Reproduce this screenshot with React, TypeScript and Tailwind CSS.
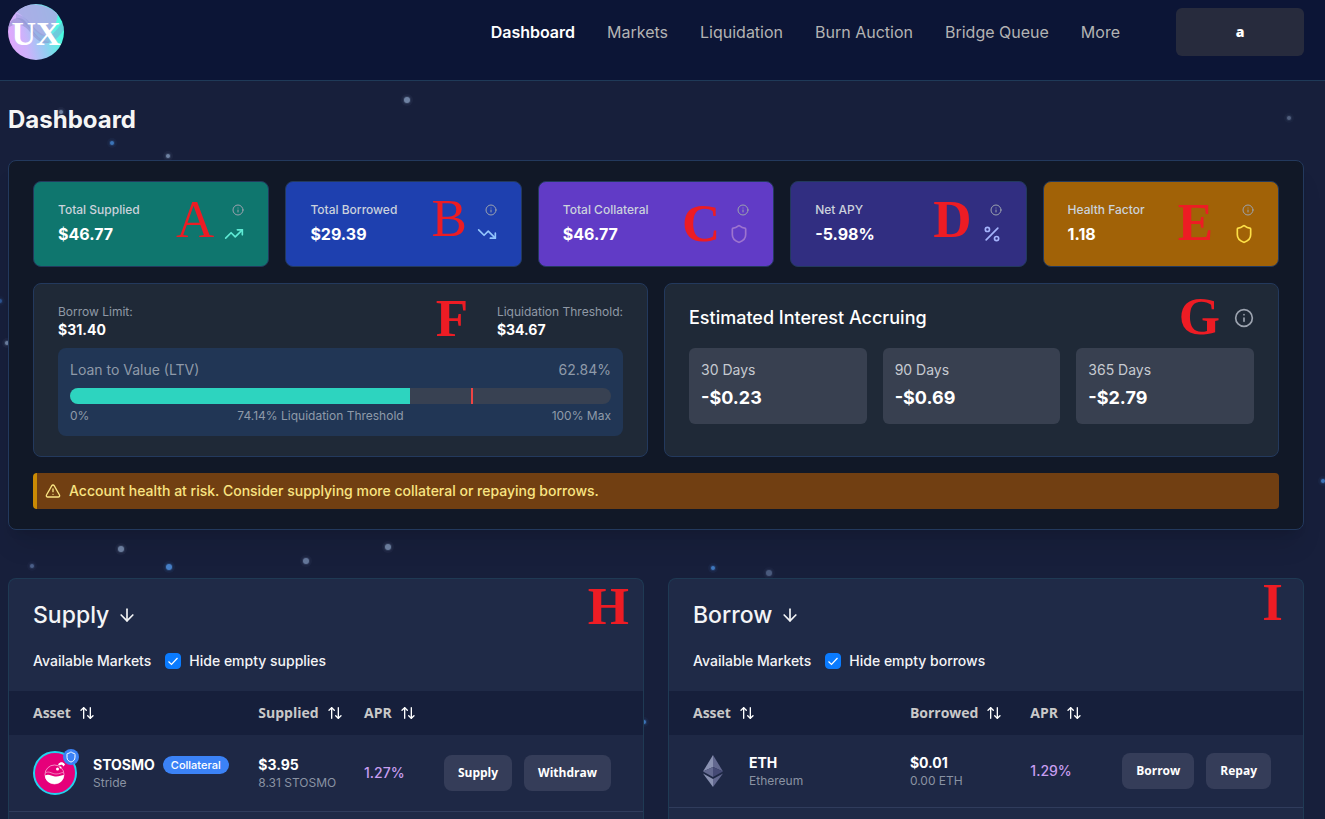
import React, { useState } from "react";
import {
  ArrowDown,
  ArrowUpDown,
  Info,
  Percent,
  Shield,
  TrendingDown,
  TrendingUp,
  TriangleAlert,
} from "lucide-react";
import type { LucideIcon } from "lucide-react";

const HEADING = "font-['Open_Sans',sans-serif]";

const STARS = [
  { x: 407, y: 100, r: 3, fill: "#6f82a3" },
  { x: 1289, y: 118, r: 2, fill: "#52617f" },
  { x: 112, y: 143, r: 2, fill: "#3c74b8" },
  { x: 168, y: 156, r: 2, fill: "#6f82a3" },
  { x: 61, y: 112, r: 2, fill: "#6f82a3" },
  { x: 0, y: 301, r: 2, fill: "#2d5391" },
  { x: 7, y: 343, r: 2, fill: "#6f82a3" },
  { x: 1323, y: 481, r: 2, fill: "#3c74b8" },
  { x: 121, y: 549, r: 3, fill: "#6f82a3" },
  { x: 32, y: 566, r: 2, fill: "#4b5f88" },
  { x: 169, y: 567, r: 3, fill: "#467fc6" },
  { x: 306, y: 561, r: 3, fill: "#64779a" },
  { x: 388, y: 547, r: 3, fill: "#6f82a3" },
  { x: 713, y: 568, r: 2, fill: "#3f78be" },
  { x: 769, y: 573, r: 3, fill: "#4a5a7d" },
  { x: 644, y: 722, r: 2, fill: "#3c74b8" },
];

function Starfield() {
  return (
    <svg aria-hidden="true" className="pointer-events-none absolute inset-0 h-full w-full">
      {STARS.map((s) => (
        <g key={`${s.x}-${s.y}`} fill={s.fill}>
          <circle cx={s.x} cy={s.y} r={s.r + 3} opacity={0.08} />
          <circle cx={s.x} cy={s.y} r={s.r + 1} opacity={0.22} />
          <circle cx={s.x} cy={s.y} r={s.r} />
        </g>
      ))}
    </svg>
  );
}

function Logo() {
  return (
    <a href="#home" aria-label="UX home" className="block h-14 w-14 shrink-0">
      <svg viewBox="0 0 56 56" className="h-14 w-14">
        <defs>
          <linearGradient id="lg" x1="0" y1="0.75" x2="1" y2="0.5">
            <stop offset="0" stopColor="#e3a6fd" />
            <stop offset="0.3" stopColor="#cdb2fb" />
            <stop offset="0.62" stopColor="#93cdf2" />
            <stop offset="0.85" stopColor="#5feee4" />
            <stop offset="1" stopColor="#42ffe0" />
          </linearGradient>
          <clipPath id="lc">
            <circle cx="28" cy="28" r="28" />
          </clipPath>
        </defs>
        <g clipPath="url(#lc)">
          <rect width="56" height="56" fill="url(#lg)" />
          <path d="M8 4C20 0 38 -2 50 10C48 22 44 28 38 32C26 32 20 12 8 8Z" fill="#a7ade4" opacity="0.9" />
          <path d="M0 22C4 14 10 12 16 16C24 24 30 38 42 38C36 42 28 36 22 28C16 20 8 18 0 24Z" fill="#8b8fcb" opacity="0.55" />
          <path d="M8 10C22 12 26 30 40 32C48 30 52 20 56 16V26C50 34 44 40 38 38C26 34 20 18 8 14Z" fill="#8793cf" opacity="0.4" />
        </g>
        <text x="28" y="41" textAnchor="middle" fill="#fff" className="font-['Liberation_Serif',serif] text-[34px] font-bold">
          UX
        </text>
      </svg>
    </a>
  );
}

const NAV = ["Dashboard", "Markets", "Liquidation", "Burn Auction", "Bridge Queue", "More"];

function Header() {
  return (
    <header className="relative border-b border-[#1f3a58] bg-[#0c1536] pr-[21px] pb-4 pl-2">
      <div className="flex h-16 items-center">
        <Logo />
        <nav className="ml-auto flex gap-8 text-base text-[#b3b3b3]">
          {NAV.map((item, i) => (
            <a key={item} href={`#${item}`} className={i === 0 ? "font-semibold text-white" : ""}>
              {item}
            </a>
          ))}
        </nav>
        <button type="button" className={`${HEADING} ml-14 h-12 w-32 rounded-md bg-[#272b3d] text-sm font-extrabold text-white`}>
          a
        </button>
      </div>
    </header>
  );
}

function Marker({ letter, className }: { letter: string; className: string }) {
  return (
    <span
      className={`pointer-events-none absolute font-['Liberation_Serif',serif] text-[53px] leading-none text-[#ed1c24] ${className}`}
    >
      {letter}
    </span>
  );
}

type Stat = {
  label: string;
  value: string;
  icon: LucideIcon;
  bg: string;
  iconColor: string;
  letter: string;
  marker: string;
};

const STATS: Stat[] = [
  { label: "Total Supplied", value: "$46.77", icon: TrendingUp, bg: "bg-[#0f766e]", iconColor: "text-[#5eead4]", letter: "A", marker: "top-[11px] right-[54px]" },
  { label: "Total Borrowed", value: "$29.39", icon: TrendingDown, bg: "bg-[#1e40af]", iconColor: "text-[#93c5fd]", letter: "B", marker: "top-[10px] right-[54px]" },
  { label: "Total Collateral", value: "$46.77", icon: Shield, bg: "bg-[#613bc6]", iconColor: "text-[#9d74cf]", letter: "C", marker: "top-[15px] right-[53px] font-bold" },
  { label: "Net APY", value: "-5.98%", icon: Percent, bg: "bg-[#312e81]", iconColor: "text-[#a5b4fc]", letter: "D", marker: "top-[11px] right-[54px] font-bold" },
  { label: "Health Factor", value: "1.18", icon: Shield, bg: "bg-[#a16207]", iconColor: "text-[#fde047]", letter: "E", marker: "top-[14px] right-[65px] font-bold" },
];

function StatCard({ stat }: { stat: Stat }) {
  const Icon = stat.icon;
  return (
    <div className={`relative rounded-lg border border-[#23395d] px-6 py-5 ${stat.bg}`}>
      <div className="flex items-center justify-between">
        <span className="text-xs font-medium text-[#cbd2dc]">{stat.label}</span>
        <Info size={12} className="text-[#9ca3af]" />
      </div>
      <div className="mt-1 flex items-center justify-between">
        <span className="text-base font-bold text-white">{stat.value}</span>
        <Icon size={20} className={stat.iconColor} />
      </div>
      <Marker letter={stat.letter} className={stat.marker} />
    </div>
  );
}

const LTV = 62.84;
const LIQUIDATION = 74.14;

function BorrowLimitCard() {
  return (
    <div className="relative rounded-lg border border-[#23395d] bg-[#1f2937] px-6 py-5">
      <div className="mb-2 flex justify-between text-xs text-[#9099a6]">
        <div>
          <div>Borrow Limit:</div>
          <div className="text-sm font-bold text-white">$31.40</div>
        </div>
        <div>
          <div>Liquidation Threshold:</div>
          <div className="text-sm font-bold text-white">$34.67</div>
        </div>
      </div>
      <div className="rounded-lg bg-[#213655] p-3 text-[#8f9aa9]">
        <div className="mb-2 flex justify-between text-sm">
          <span>Loan to Value (LTV)</span>
          <span>62.84%</span>
        </div>
        <div className="relative h-4 overflow-hidden rounded-full bg-[#384152]">
          <div className="h-full bg-[#2dd4bf]" style={{ width: `${LTV}%` }} />
          <div className="absolute inset-y-0 w-0.5 bg-[#ef4444]" style={{ left: `${LIQUIDATION}%` }} />
        </div>
        <div className="mt-1 flex justify-between text-xs">
          <span>0%</span>
          <span>74.14% Liquidation Threshold</span>
          <span>100% Max</span>
        </div>
      </div>
      <Marker letter="F" className="top-[8px] right-[179px] font-bold" />
    </div>
  );
}

const INTEREST = [
  { period: "30 Days", amount: "-$0.23" },
  { period: "90 Days", amount: "-$0.69" },
  { period: "365 Days", amount: "-$2.79" },
];

function InterestCard() {
  return (
    <div className="relative rounded-lg border border-[#23395d] bg-[#1f2937] px-6 py-5">
      <div className="mb-4 flex items-center justify-between">
        <h2 className="text-lg font-medium text-white">Estimated Interest Accruing</h2>
        <Info size={20} className="text-[#9ca3af]" />
      </div>
      <div className="grid grid-cols-3 gap-4">
        {INTEREST.map((row) => (
          <div key={row.period} className="rounded-md bg-[#384050] p-3">
            <div className="text-sm text-[#c6cad0]">{row.period}</div>
            <div className="mt-1 text-lg font-bold text-white">{row.amount}</div>
          </div>
        ))}
      </div>
      <Marker letter="G" className="top-[6px] right-[58px] font-bold" />
    </div>
  );
}

function Overview() {
  return (
    <section className="relative rounded-lg border border-[#23395d] bg-[#111827] px-6 py-5 shadow-xl">
      <div className="grid grid-cols-5 gap-4">
        {STATS.map((s) => (
          <StatCard key={s.label} stat={s} />
        ))}
      </div>
      <div className="mt-4 grid grid-cols-2 gap-4">
        <BorrowLimitCard />
        <InterestCard />
      </div>
      <div className="mt-4 flex items-center gap-2 rounded-sm border-l-4 border-[#ca8a04] bg-[#713f12] p-2 text-sm font-medium text-[#f9e482]">
        <TriangleAlert size={16} />
        <span>Account health at risk. Consider supplying more collateral or repaying borrows.</span>
      </div>
    </section>
  );
}

function StrideIcon() {
  return (
    <div className="relative h-11 w-11 shrink-0">
      <svg viewBox="0 0 44 44" className="h-11 w-11">
        <circle cx="22" cy="22" r="21" fill="#e6007a" stroke="#22d3ee" strokeWidth="2" />
        <circle cx="21.500" cy="23.500" r="9.500" fill="none" stroke="#fff" strokeWidth="0.700" opacity="0.8" />
        <path d="M12 24.500C16 22.500 18 25 22 25.500C26 26 28 24 31 24C31 29 27 33 21.500 33C16 33 12 29 12 24.500Z" fill="#fff" />
        <path d="M13 21.500C17 20 19 23 23 23C27 23 28 21.500 30 21.500" fill="none" stroke="#fff" strokeWidth="0.800" opacity="0.6" />
        <circle cx="24.500" cy="18" r="1.500" fill="#fff" />
        <path d="M25 13.500C27 10.500 30 10.500 32 13.500L30.500 15.500C29.500 13.500 28 13 26.500 14.500Z" fill="#fff" />
        <circle cx="27.500" cy="16.500" r="1" fill="#fff" />
      </svg>
      <span className="absolute -top-0.5 -right-0.5 flex h-4 w-4 items-center justify-center rounded-full bg-[#3b82f6]">
        <Shield size={12} className="text-white" />
      </span>
    </div>
  );
}

function EthIcon() {
  return (
    <div className="flex h-10 w-10 shrink-0 items-center justify-center">
      <svg viewBox="0 0 20 32" className="h-8 w-5">
        <path d="M10 0L0 16.500L10 12Z" fill="#8a92b2" />
        <path d="M10 0L20 16.500L10 12Z" fill="#62688f" />
        <path d="M0 16.500L10 12V22Z" fill="#62688f" />
        <path d="M20 16.500L10 12V22Z" fill="#454a75" />
        <path d="M0 18.500L10 24V32Z" fill="#8a92b2" />
        <path d="M20 18.500L10 24V32Z" fill="#62688f" />
      </svg>
    </div>
  );
}

type Market = {
  title: string;
  filter: string;
  amountHeading: string;
  columns: [string, string];
  amountPad: string;
  symbol: string;
  name: string;
  collateral: boolean;
  icon: React.ReactNode;
  value: string;
  units: string;
  apr: string;
  actions: string[];
  letter: string;
  marker: string;
};

const MARKETS: Market[] = [
  {
    title: "Supply",
    filter: "Hide empty supplies",
    amountHeading: "Supplied",
    columns: ["w-[39%]", "w-[17%]"],
    amountPad: "pl-0.5",
    symbol: "STOSMO",
    name: "Stride",
    collateral: true,
    icon: <StrideIcon />,
    value: "$3.95",
    units: "8.31 STOSMO",
    apr: "1.27%",
    actions: ["Supply", "Withdraw"],
    letter: "H",
    marker: "top-[1px] right-[14px] font-bold",
  },
  {
    title: "Borrow",
    filter: "Hide empty borrows",
    amountHeading: "Borrowed",
    columns: ["w-[38%]", "w-[19%]"],
    amountPad: "pl-0",
    symbol: "ETH",
    name: "Ethereum",
    collateral: false,
    icon: <EthIcon />,
    value: "$0.01",
    units: "0.00 ETH",
    apr: "1.29%",
    actions: ["Borrow", "Repay"],
    letter: "I",
    marker: "top-[-3px] right-[20px] font-bold",
  },
];

function SortButton({ label }: { label: string }) {
  return (
    <button type="button" className="flex items-center gap-2 font-bold">
      {label}
      <ArrowUpDown size={16} className="text-white" />
    </button>
  );
}

function MarketPanel({ market }: { market: Market }) {
  const [hideEmpty, setHideEmpty] = useState(true);
  const id = `hide-${market.title.toLowerCase()}`;
  return (
    <section className="relative rounded-t-lg border border-b-0 border-[#1f3a54] bg-[#1f2a47]">
      <div className="px-6 py-5">
        <h2 className="flex items-center gap-2 text-[23px] leading-8 font-medium text-[#f3f4f6]">
          {market.title}
          <ArrowDown size={20} />
        </h2>
        <div className="mt-5 flex items-center text-sm font-medium text-[#f3f4f6]">
          <span>Available Markets</span>
          <span className="relative ml-3.5 h-4 w-4">
            <input
              id={id}
              type="checkbox"
              checked={hideEmpty}
              onChange={(e) => setHideEmpty(e.target.checked)}
              className="block h-4 w-4 appearance-none rounded-sm border border-[#0a7bff] checked:bg-[#0a7bff]"
            />
            {hideEmpty && (
              <svg viewBox="0 0 16 16" className="pointer-events-none absolute inset-0 h-4 w-4">
                <path d="M3.500 8.500L6.500 11.500L12.500 5" fill="none" stroke="#fff" strokeWidth="1.200" />
              </svg>
            )}
          </span>
          <label htmlFor={id} className="ml-2">
            {market.filter}
          </label>
        </div>
      </div>
      <table className="w-full table-fixed border-collapse text-left">
        <thead className={`${HEADING} bg-[#161f3b] text-sm text-[#c9c9c9]`}>
          <tr className="h-11">
            <th className={`pl-6 ${market.columns[0]}`}>
              <SortButton label="Asset" />
            </th>
            <th className={`${market.columns[1]} ${market.amountPad}`}>
              <SortButton label={market.amountHeading} />
            </th>
            <th className="w-[12%]">
              <SortButton label="APR" />
            </th>
            <th aria-label="Actions" />
          </tr>
        </thead>
        <tbody>
          <tr className="border-b border-[#303c5c] bg-[#1e2845]">
            <td className="py-4 pl-6">
              <div className="flex items-center gap-4">
                {market.icon}
                <div>
                  <div className="flex items-center gap-2">
                    <span className="text-sm font-bold text-white">{market.symbol}</span>
                    {market.collateral && (
                      <span className="rounded-full bg-[#3b82f6] px-2 text-[11px] leading-[18px] font-medium text-white">
                        Collateral
                      </span>
                    )}
                  </div>
                  <div className="text-xs text-[#8a93a3]">{market.name}</div>
                </div>
              </div>
            </td>
            <td className={market.amountPad}>
              <div className="text-sm font-bold text-white">{market.value}</div>
              <div className="text-xs text-[#8a93a3]">{market.units}</div>
            </td>
            <td className="text-sm font-medium text-[#c79df0]">{market.apr}</td>
            <td className="pr-8">
              <div className="flex justify-end gap-3">
                {market.actions.map((action) => (
                  <button
                    key={action}
                    type="button"
                    className={`${HEADING} h-9 rounded-lg bg-[#353d59] px-3.5 text-xs font-bold text-white`}
                  >
                    {action}
                  </button>
                ))}
              </div>
            </td>
          </tr>
        </tbody>
      </table>
      <Marker letter={market.letter} className={market.marker} />
    </section>
  );
}

export default function App() {
  return (
    <div className="relative flex min-h-screen flex-col bg-[#171f3b] font-['Inter',sans-serif]">
      <Header />
      <main className="flex flex-1 flex-col pr-[21px] pl-2">
        <h1 className="mt-[25px] mb-[26px] text-2xl leading-7 font-bold text-[#f5f5f5]">Dashboard</h1>
        <Starfield />
        <Overview />
        <div className="relative mt-12 grid flex-1 grid-cols-2 gap-6">
          {MARKETS.map((m) => (
            <MarketPanel key={m.title} market={m} />
          ))}
        </div>
      </main>
    </div>
  );
}
